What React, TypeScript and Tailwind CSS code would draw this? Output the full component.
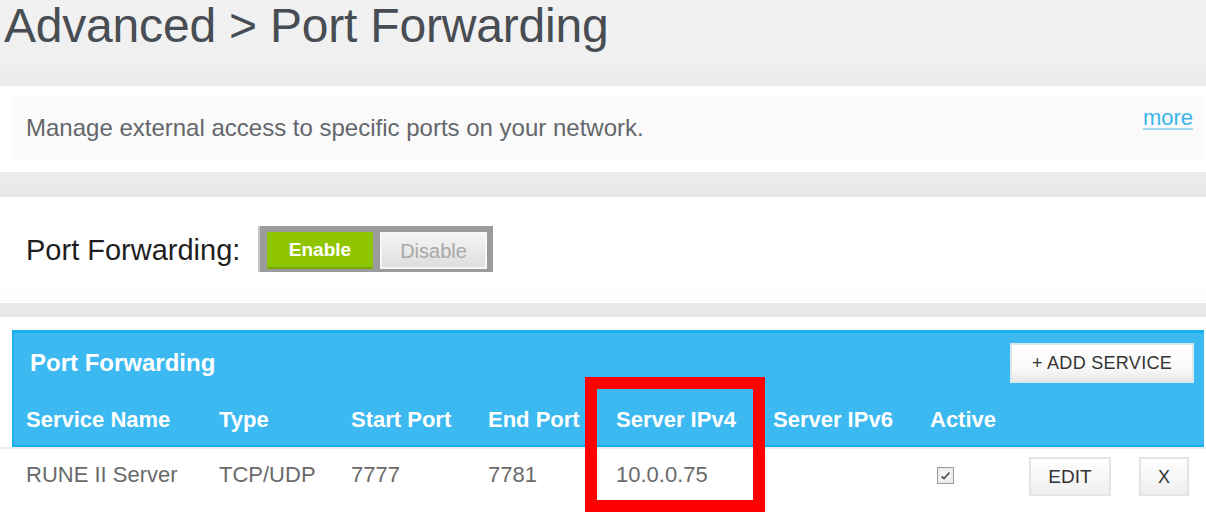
import React from "react";

const cols = "grid grid-cols-[193px_132px_137px_128px_157px_157px_99px_110px_1fr]";

function CheckIcon() {
  return (
    <svg width="17" height="17" viewBox="0 0 17 17">
      <rect x="0.5" y="0.5" width="16" height="16" fill="#f4f4f4" stroke="#9a9a9a" />
      <rect x="2" y="2" width="13" height="13" fill="none" stroke="#e2e2e2" />
      <path d="M4.5 9.5 L7 11.5 L12.5 5.5" fill="none" stroke="#555" strokeWidth="1.8" />
    </svg>
  );
}

export default function App() {
  return (
    <div className="relative w-[1206px] h-[516px] overflow-hidden bg-white font-['Liberation_Sans',Arial,sans-serif]">
      {/* Title band */}
      <div className="h-[86px] bg-[linear-gradient(to_bottom,#f1f1f1_0%,#f0f0f0_68%,#eaeaea_100%)] pl-[4px] pt-[2px]">
        <h1 className="text-[48px] leading-none text-[#484d53] tracking-[-0.2px]">Advanced &gt; Port Forwarding</h1>
      </div>

      {/* Description */}
      <div className="pt-[11px] pb-[13px]">
        <div className="ml-[12px] mr-[2px] h-[62px] bg-[#fafafa] flex justify-between items-start">
          <p className="pl-[14px] pt-[19px] text-[24px] leading-none text-[#64676b]">
            Manage external access to specific ports on your network.
          </p>
          <a className="mr-[11px] mt-[10px] text-[22px] leading-none text-[#3db5ea] underline decoration-[#9fd8f2] decoration-2 underline-offset-[3px]">
            more
          </a>
        </div>
      </div>

      {/* gray band */}
      <div className="h-[25px] bg-[linear-gradient(to_bottom,#ededed,#e7e7e7)]" />

      {/* Toggle section */}
      <div className="h-[106px] bg-[linear-gradient(to_bottom,#ffffff_80%,#fbfbfb_100%)] pt-[29px] pl-[26px] flex items-start">
        <div className="w-[232px] h-[46px] flex items-center">
          <span className="text-[29px] leading-none text-[#1f1f1f] pt-[3px]">Port Forwarding:</span>
        </div>
        <div className="h-[46px] w-[235px] bg-[#9b9b9b] border-l-[2px] border-[#c8c8c8] pl-[7px] pr-[5px] pt-[6px] pb-[3px] flex gap-[7px]">
          <div className="w-[106px] h-[37px] bg-[#8fc400] border-b-[2px] border-[#78a800] flex items-center justify-center text-white font-bold text-[19px] leading-none">
            Enable
          </div>
          <div className="w-[107px] h-[37px] bg-[linear-gradient(to_bottom,#f4f4f4,#dedede)] border-[2px] border-[#f7f7f7] flex items-center justify-center text-[#a8a8a8] text-[20px] leading-none">
            Disable
          </div>
        </div>
      </div>

      {/* thin gray band */}
      <div className="h-[14px] bg-[#e8e8e8]" />
      <div className="h-[13px]" />

      {/* Blue panel */}
      <div className="ml-[12px] mr-[2px] h-[117px] bg-[#3bb9f0] border-t-[3px] border-l-[2px] border-b-[2px] border-[#19afeb] flex flex-col">
        <div className="h-[62px] flex justify-between items-start">
          <h2 className="pl-[16px] pt-[18px] text-[24px] leading-none font-bold text-white">Port Forwarding</h2>
          <button className="mt-[10px] mr-[10px] w-[184px] h-[40px] bg-[linear-gradient(to_bottom,#ffffff_0%,#fbfbfb_60%,#e9e9e9_100%)] border-[2px] border-[#d6e9f2] text-[18px] leading-none text-[#333] tracking-[0.3px]">
            + ADD SERVICE
          </button>
        </div>
        <div className={`${cols} pl-[12px] pt-[14px] text-[22px] leading-none font-bold text-white`}>
          <span>Service Name</span>
          <span>Type</span>
          <span>Start Port</span>
          <span>End Port</span>
          <span>Server IPv4</span>
          <span>Server IPv6</span>
          <span>Active</span>
          <span />
          <span />
        </div>
      </div>
      <div className="h-[2px] bg-[#e6eef3]" />

      {/* Data row */}
      <div className={`${cols} pl-[26px] items-start text-[22px] leading-none text-[#6a6a6a]`}>
        <span className="mt-[15px]">RUNE II Server</span>
        <span className="mt-[15px]">TCP/UDP</span>
        <span className="mt-[15px]">7777</span>
        <span className="mt-[15px]">7781</span>
        <span className="mt-[15px]">10.0.0.75</span>
        <span className="mt-[15px]" />
        <span className="mt-[18px] pl-[7px]">
          <CheckIcon />
        </span>
        <span className="mt-[8px]">
          <button className="w-[82px] h-[39px] bg-[linear-gradient(to_bottom,#ffffff,#efefef)] border-[2px] border-[#e4e4e4] text-[19px] leading-none text-[#333]">
            EDIT
          </button>
        </span>
        <span className="mt-[8px]">
          <button className="w-[50px] h-[39px] bg-[linear-gradient(to_bottom,#ffffff,#efefef)] border-[2px] border-[#e4e4e4] text-[18px] leading-none text-[#333]">
            X
          </button>
        </span>
      </div>

      {/* Red highlight annotation */}
      <div className="absolute left-[585px] top-[377px] w-[180px] h-[135px] border-[12px] border-[#ff0000]" />
    </div>
  );
}
